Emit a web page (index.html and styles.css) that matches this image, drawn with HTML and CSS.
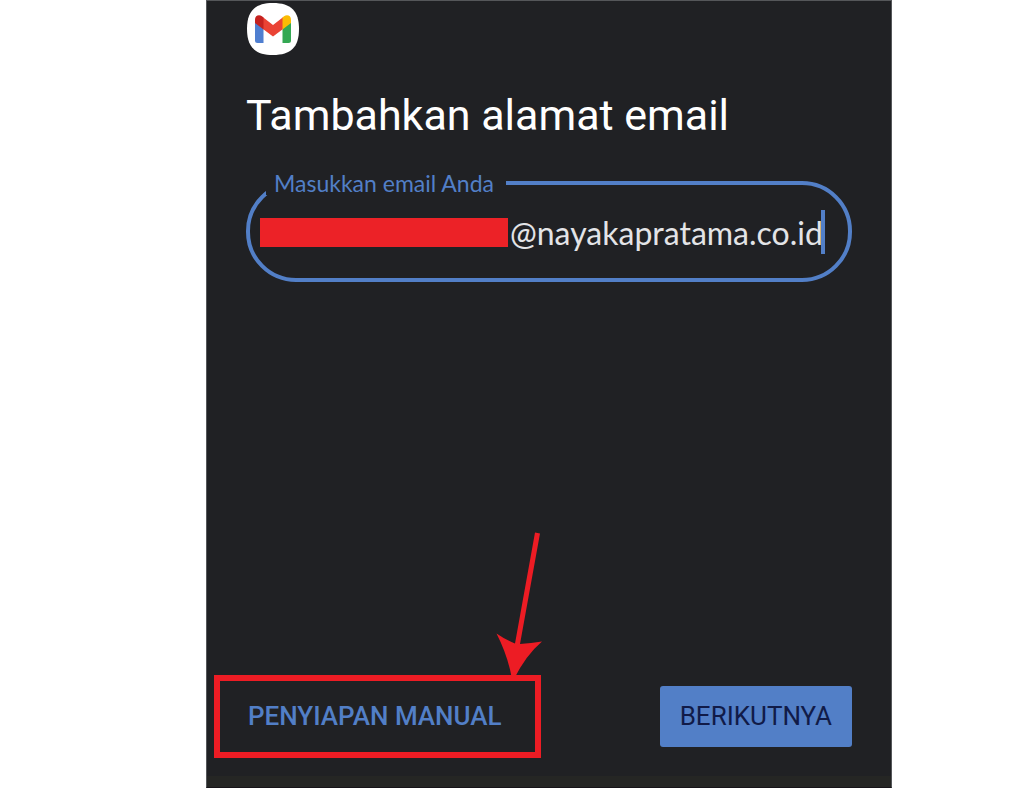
FILE: index.html
```html
<!DOCTYPE html>
<html lang="id">
<head>
<meta charset="utf-8">
<meta name="viewport" content="width=device-width, initial-scale=1">
<title>Tambahkan alamat email</title>
<link rel="stylesheet" href="styles.css">
</head>
<body>
<main class="screen">
  <form class="setup">
    <svg class="logo" viewBox="0 0 52 52" aria-hidden="true">
      <path fill="#fff" d="M26 0C44 0 52 8 52 26S44 52 26 52 0 44 0 26 8 0 26 0Z"/>
      <path fill="#4f7fd0" d="M8 19l8.500 6.500V40H10.500a2.500 2.500 0 0 1-2.500-2.500Z"/>
      <path fill="#34a853" d="M35.500 25.500L44 19v18.500a2.500 2.500 0 0 1-2.500 2.500h-6Z"/>
      <path fill="#ea4335" d="M16 14.200L26 22l10-7.800V26L26 33.500 16 26Z"/>
      <path fill="#c5221f" d="M8 20v-3.500c0-4 4-5.500 7-3.200l1.500 1.200V26.500L8 20Z"/>
      <path fill="#fbbc04" d="M44 20v-3.500c0-4-4-5.500-7-3.200l-1.500 1.200V26.500L44 20Z"/>
    </svg>
    <h1 class="title">Tambahkan alamat email</h1>
    <fieldset class="field">
      <legend class="legend"><label for="email">Masukkan email Anda</label></legend>
      <div class="entry">
        <span class="redaction"></span>
        <input class="input" id="email" type="text" value="@nayakapratama.co.id">
        <span class="caret"></span>
      </div>
    </fieldset>
    <div class="actions">
      <div class="callout">
        <button class="button button-text" type="button">PENYIAPAN MANUAL</button>
        <svg class="arrow" viewBox="0 0 46 149" aria-hidden="true">
          <path fill="#ed1c24" d="M39 0.500L44 1.500 24 112Q35 111 46 109.500Q30 123 18 147H16Q12 124 0.500 101.500Q10 108 19 111.500Z"/>
        </svg>
      </div>
      <button class="button button-filled" type="button">BERIKUTNYA</button>
    </div>
  </form>
  <div class="navbar"></div>
</main>
</body>
</html>
```
FILE: styles.css
```css
* { box-sizing: border-box; }

body {
  margin: 0;
  padding: 0 132px 0 206px;
  background: #fff;
  font-family: Roboto, "Liberation Sans", sans-serif;
}

.screen {
  display: flex;
  flex-direction: column;
  min-height: 100vh;
  background: #202124;
  border: 1px solid #55575a;
  border-bottom-color: #171419;
}

.setup {
  display: flex;
  flex-direction: column;
  flex: 1;
  padding: 2px 39px 18px;
}

.logo {
  width: 52px;
  height: 52px;
  margin-left: 1px;
}

.title {
  margin: 34px 0 0;
  color: #fff;
  font-size: 43px;
  line-height: 52px;
  font-weight: 400;
}

.field {
  min-width: 0;
  margin: 30px 0 0;
  padding: 15px 23px 24px 10px;
  border: 4px solid #527fc7;
  border-radius: 50px;
}

.legend {
  margin-left: 6px;
  padding: 0 12px 0 8px;
  color: #527fc7;
  font-family: Lato, sans-serif;
  font-size: 23px;
  line-height: 24px;
}

.entry {
  display: flex;
  align-items: center;
}

.redaction {
  flex: 1;
  height: 29px;
  background: #ec2227;
}

.input {
  width: 317px;
  height: 44px;
  padding: 0 0 0 2px;
  border: 0;
  outline: 0;
  background: transparent;
  color: #e3e4e7;
  font-family: Lato, sans-serif;
  font-size: 32px;
}

.caret {
  width: 4px;
  height: 44px;
  margin-left: -4px;
  background: #527fc7;
}

.actions {
  display: flex;
  justify-content: space-between;
  align-items: center;
  margin-top: auto;
}

.callout {
  position: relative;
  margin-left: -32px;
  border: 6px solid #ed1c24;
}

.arrow {
  position: absolute;
  right: -7px;
  bottom: 100%;
  width: 46px;
  height: 149px;
}

.button {
  border: 0;
  font-family: inherit;
  font-size: 26px;
  white-space: nowrap;
}

.button-text {
  display: block;
  padding: 20px 33px 20px 28px;
  background: transparent;
  color: #527fc7;
  font-weight: 500;
  line-height: 31px;
}

.button-filled {
  padding: 15px 20px;
  border-radius: 3px;
  background: #527fc7;
  color: #111b48;
  font-weight: 400;
  line-height: 31px;
}

.navbar {
  height: 11px;
  background: #252624;
}
```
